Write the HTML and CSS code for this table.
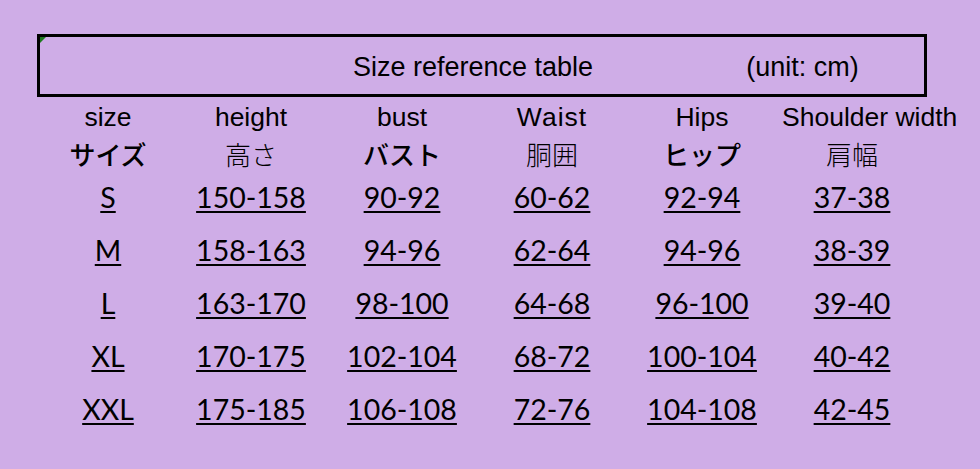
FILE: index.html
```html
<!DOCTYPE html>
<html>
<head>
<meta charset="utf-8">
<link rel="stylesheet" href="styles.css">
</head>
<body>
<div class="page">
  <div class="title-box">
    <span class="title">Size reference table</span>
    <span class="unit">(unit: cm)</span>
  </div>
  <div class="table">
    <div class="en">size</div>
    <div class="en">height</div>
    <div class="en">bust</div>
    <div class="en waist">Waist</div>
    <div class="en">Hips</div>
    <div class="en shoulder">Shoulder width</div>

    <div class="jp bold">サイズ</div>
    <div class="jp">高さ</div>
    <div class="jp bold">バスト</div>
    <div class="jp">胴囲</div>
    <div class="jp bold">ヒップ</div>
    <div class="jp">肩幅</div>

    <div class="cell"><u>S</u></div>
    <div class="cell"><u>150-158</u></div>
    <div class="cell"><u>90-92</u></div>
    <div class="cell"><u>60-62</u></div>
    <div class="cell"><u>92-94</u></div>
    <div class="cell"><u>37-38</u></div>

    <div class="cell"><u>M</u></div>
    <div class="cell"><u>158-163</u></div>
    <div class="cell"><u>94-96</u></div>
    <div class="cell"><u>62-64</u></div>
    <div class="cell"><u>94-96</u></div>
    <div class="cell"><u>38-39</u></div>

    <div class="cell"><u>L</u></div>
    <div class="cell"><u>163-170</u></div>
    <div class="cell"><u>98-100</u></div>
    <div class="cell"><u>64-68</u></div>
    <div class="cell"><u>96-100</u></div>
    <div class="cell"><u>39-40</u></div>

    <div class="cell"><u>XL</u></div>
    <div class="cell"><u>170-175</u></div>
    <div class="cell"><u>102-104</u></div>
    <div class="cell"><u>68-72</u></div>
    <div class="cell"><u>100-104</u></div>
    <div class="cell"><u>40-42</u></div>

    <div class="cell"><u>XXL</u></div>
    <div class="cell"><u>175-185</u></div>
    <div class="cell"><u>106-108</u></div>
    <div class="cell"><u>72-76</u></div>
    <div class="cell"><u>104-108</u></div>
    <div class="cell"><u>42-45</u></div>
  </div>
</div>
</body>
</html>
```

FILE: styles.css
```css
html, body {
  margin: 0;
  padding: 0;
  background: #cfade7;
}
body {
  width: 980px;
  height: 469px;
  overflow: hidden;
  color: #000;
}
.page {
  padding: 34px 0 0 37px;
}
.title-box {
  position: relative;
  box-sizing: border-box;
  width: 890px;
  height: 63px;
  border: 3px solid #000;
  display: flex;
  align-items: center;
  padding-top: 4px;
  font-family: "Liberation Sans", Arial, sans-serif;
  font-size: 27px;
}
.title-box::before {
  content: "";
  position: absolute;
  left: 0;
  top: 0;
  border-top: 6px solid #1d7a1d;
  border-right: 6px solid transparent;
}
.title {
  margin-left: 313px;
}
.unit {
  margin-left: 153px;
}
.table {
  margin-left: -1px;
  margin-top: 2px;
  display: grid;
  grid-template-columns: 144px 142px 160px 140px 160px 140px;
  grid-template-rows: 37px 35px repeat(5, 53px);
}
.table > div {
  display: flex;
  align-items: center;
  justify-content: center;
  white-space: nowrap;
}
.en {
  font-family: "Liberation Sans", Arial, sans-serif;
  font-size: 26.5px;
}
.waist {
  letter-spacing: 1px;
}
.table > .shoulder {
  justify-content: flex-start;
}
.jp {
  font-family: "Noto Sans CJK JP", sans-serif;
  font-size: 26px;
  font-weight: 300;
  padding-bottom: 1px;
}
.jp.bold {
  font-weight: 500;
}
.cell {
  font-family: Lato, "Liberation Sans", sans-serif;
  font-size: 28.5px;
  padding-bottom: 1px;
}
.cell u {
  text-decoration-thickness: 2px;
  text-underline-offset: 3px;
}
```
